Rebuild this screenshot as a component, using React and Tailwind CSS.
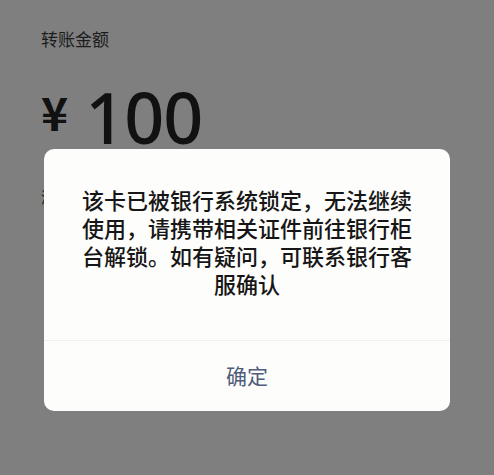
const cjk = { fontFamily: '"Noto Sans CJK SC", "Noto Sans", sans-serif' }

export default function App() {
  return (
    <div className="relative w-[494px] h-[475px] bg-[#7f7f7f] overflow-hidden" style={cjk}>
      <div className="pl-[41px] pt-[27px]">
        <div className="text-[17px] leading-[24px] text-[#1c1c1c]">转账金额</div>
        <div className="flex items-end mt-[33px] h-[62px]">
          <span className="text-[46px] leading-[46px] font-bold text-[#111] mb-[12px]">¥</span>
          <span
            className="ml-[17px] text-[70px] leading-[60px] font-medium text-[#111] tracking-[-1px] mb-[-1px]"
            style={{ fontFamily: '"Noto Sans", sans-serif' }}
          >
            100
          </span>
        </div>
        <div className="mt-[41px] text-[15px] leading-[20px] text-[#1c1c1c]">添加转账说明</div>
      </div>

      <div className="absolute left-[44px] top-[149px] w-[406px] h-[262px] bg-[#fdfdfb] rounded-[10px] flex flex-col">
        <div className="flex-1 flex items-center justify-center px-[37px] pb-[8px]">
          <p className="text-[22px] leading-[28px] font-medium text-[#161616] text-center">
            该卡已被银行系统锁定，无法继续使用，请携带相关证件前往银行柜台解锁。如有疑问，可联系银行客服确认
          </p>
        </div>
        <div className="h-px bg-[#f0f0ee]" />
        <div className="h-[70px] flex items-center justify-center text-[21px] text-[#4f5c7a]">确定</div>
      </div>
    </div>
  )
}
